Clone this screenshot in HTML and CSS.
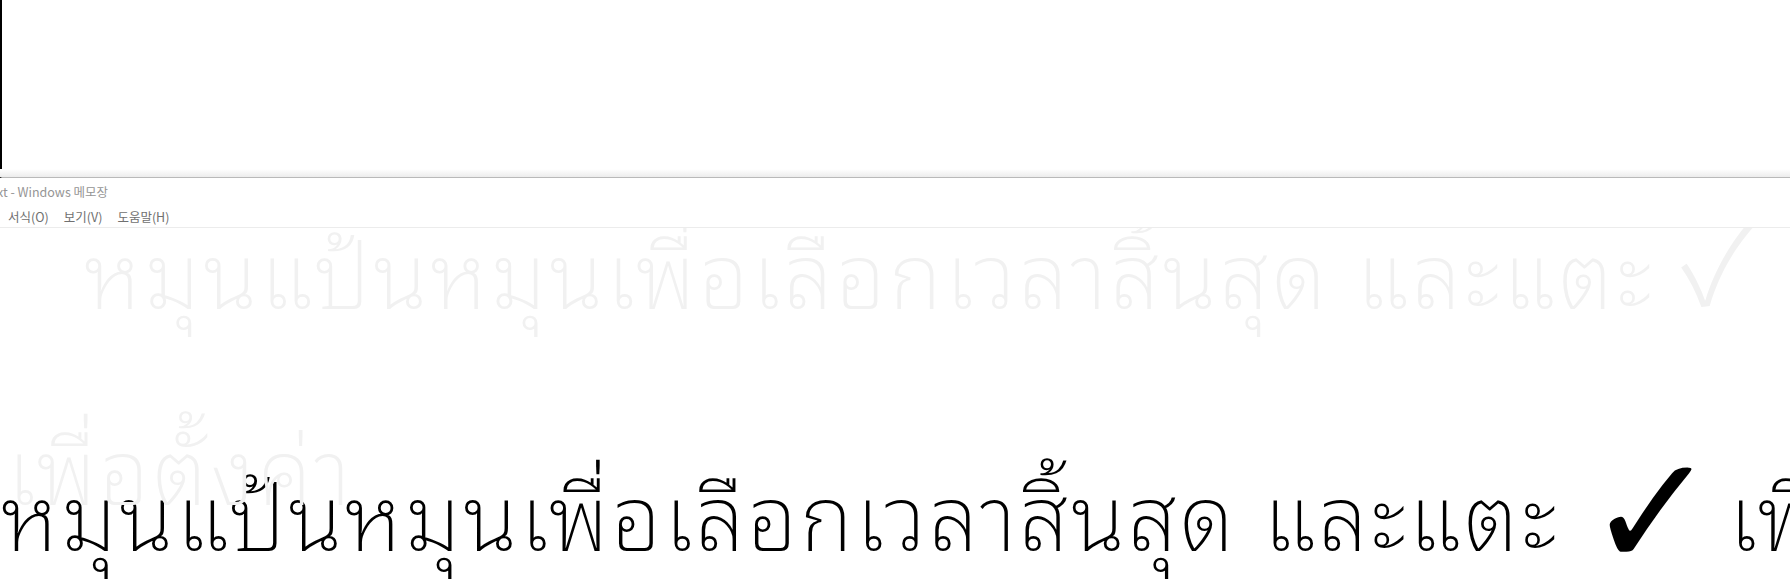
FILE: index.html
```html
<!DOCTYPE html>
<html lang="th">
<head>
<meta charset="utf-8">
<title>Notepad</title>
<link rel="stylesheet" href="styles.css">
</head>
<body>
<div class="page">
  <div class="top"><div class="top-bar"></div></div>
  <div class="window">
    <div class="titlebar"><span class="title">xt - Windows 메모장</span></div>
    <div class="menubar">
      <span class="menu-item">서식(O)</span>
      <span class="menu-item">보기(V)</span>
      <span class="menu-item">도움말(H)</span>
    </div>
    <div class="editor">
      <div class="ghost">
        <div class="ghost-line ghost-line1">หมุนแป้นหมุนเพื่อเลือกเวลาสิ้นสุด และแตะ <span class="ghost-check">✓</span></div>
        <div class="ghost-line ghost-line2">เพื่อตั้งค่า</div>
      </div>
      <div class="main-text">หมุนแป้นหมุนเพื่อเลือกเวลาสิ้นสุด และแตะ <span class="check">✓</span> เพื่อตั้งค่า</div>
    </div>
  </div>
</div>
</body>
</html>
```
FILE: styles.css
```css
html, body {
  margin: 0;
  padding: 0;
  background: #ffffff;
}
.page {
  width: 1790px;
  height: 581px;
  overflow: hidden;
  display: flex;
  flex-direction: column;
}
.top {
  height: 178px;
  flex: none;
  display: flex;
  flex-direction: column;
  justify-content: flex-end;
  border-left: 2px solid #000;
  box-sizing: border-box;
  border-bottom: 1px solid #b9b9b9;
}
.top-bar {
  height: 8px;
  margin-left: -2px;
  background: linear-gradient(#ffffff, #ececec);
}
.window {
  flex: 1;
  display: flex;
  flex-direction: column;
  font-family: "Noto Sans CJK KR", "Noto Sans", sans-serif;
}
.titlebar {
  height: 27px;
  display: flex;
  align-items: center;
  font-size: 12.5px;
  color: #959595;
}
.title {
  margin-left: -3px;
}
.menubar {
  height: 22px;
  display: flex;
  align-items: center;
  gap: 15px;
  padding-left: 8px;
  font-size: 12.5px;
  color: #707070;
  border-bottom: 1px solid #ececec;
}
.editor {
  flex: 1;
  position: relative;
  overflow: hidden;
}
.ghost {
  position: absolute;
  left: 0;
  top: -57px;
  color: #f1f1f1;
  font-family: "Noto Sans Thai Looped", "Noto Sans Thai", "Noto Sans", sans-serif;
  font-weight: 200;
  font-size: 90px;
  line-height: 196px;
  letter-spacing: 3.2px;
  white-space: nowrap;
}
.ghost-line1 {
  padding-left: 84px;
}
.ghost-line2 {
  padding-left: 7px;
}
.ghost-check {
  font-family: "Noto Sans CJK KR", sans-serif;
  font-weight: 300;
  font-size: 122px;
  line-height: 0;
  vertical-align: 5px;
  letter-spacing: 0;
}
.main-text {
  padding-top: 238px;
  padding-left: 1px;
  font-family: "Noto Sans Thai Looped", "Noto Sans Thai", "Noto Sans", sans-serif;
  font-weight: 200;
  font-size: 90px;
  line-height: 90px;
  letter-spacing: 2.8px;
  color: #000;
  white-space: nowrap;
}
.check {
  font-family: "DejaVu Sans", sans-serif;
  font-weight: 700;
  font-size: 158px;
  line-height: 0;
  vertical-align: -16px;
  letter-spacing: 0;
  margin-right: -16px;
}
```
